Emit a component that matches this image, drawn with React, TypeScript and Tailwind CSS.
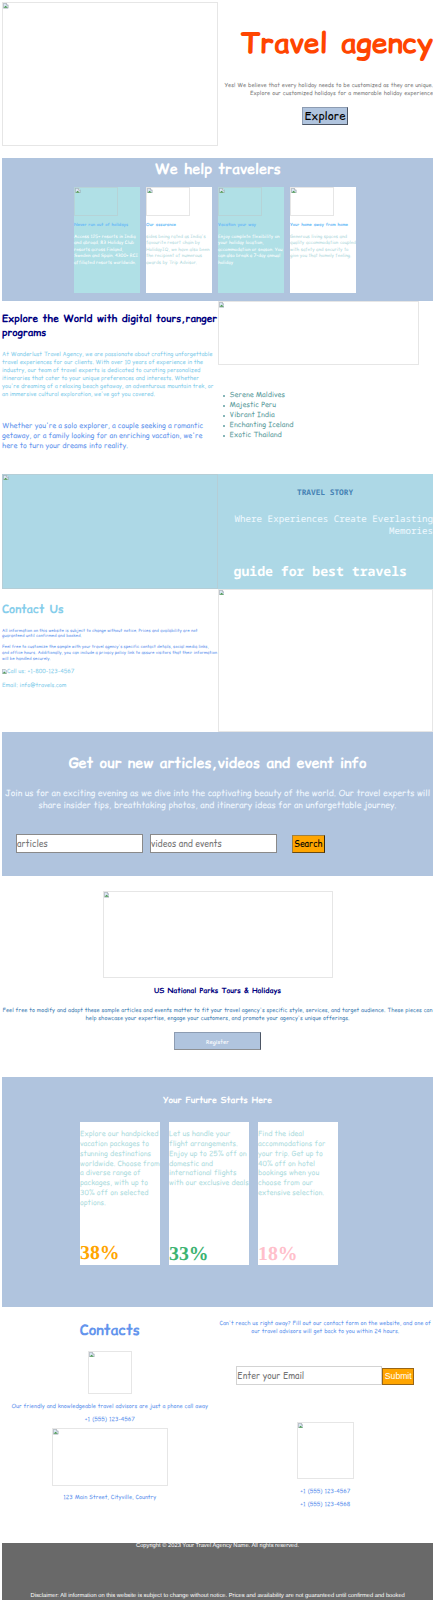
import type { ReactNode } from "react";

function Line({ w, children }: { w: string; children: ReactNode }) {
  return <span className={"block whitespace-nowrap [text-align-last:justify] " + w}>{children}</span>;
}

function Picture({ className }: { className: string }) {
  return (
    <div className={"shrink-0 border border-[#c0c0c0]/40 " + className}>
      <svg viewBox="0 0 16 16" className="block size-[5.5px]">
        <path d="M1 1h9l5 5v9H1z" fill="#dbe8f5" stroke="#8a9299" strokeWidth="1.5" />
        <path d="M10 1v5h5" fill="#fff" stroke="#8a9299" strokeWidth="1.5" />
        <path d="M2 14l5-6 4 3 3 3z" fill="#4f9a51" />
      </svg>
    </div>
  );
}

function HelpCard({ tone, heading, children }: { tone: string; heading: ReactNode; children: ReactNode }) {
  return (
    <div className={"h-[106.5px] w-[66px] " + tone}>
      <Picture className="h-[29.5px] w-[44px]" />
      <h3 className="mt-[5.4px] text-[4.3px] leading-[6px] font-bold text-[#6dbcf7]">{heading}</h3>
      <div className="mt-[6px] text-[4.6px] leading-[6.45px]">{children}</div>
    </div>
  );
}

function Offer({ percent, percentTone, children }: { percent: string; percentTone: string; children: ReactNode }) {
  return (
    <div className="flex h-[143.5px] w-[80px] flex-col justify-between bg-white">
      <div className="pt-[8px] text-[7.2px] leading-[9.9px] text-[#b0dde0]">{children}</div>
      <p className={"font-['Liberation_Serif',serif] text-[19.8px] leading-[22px] font-bold " + percentTone}>{percent}</p>
    </div>
  );
}

export default function App() {
  return (
    <div className="h-[1600px] w-[433px] overflow-hidden bg-white pt-[2px] pl-[2px] font-['Comic_Relief','Comic_Sans_MS','Comic_Neue','Open_Sans',cursive] [text-rendering:geometricPrecision]">
      <section className="flex h-[156px]">
        <Picture className="h-[144px] w-[215.5px]" />
        <div className="flex grow flex-col items-end">
          <h1 className="mt-[20.5px] text-[28.5px] leading-[40px] font-bold text-[#ff4500]">
            <Line w="w-[192.5px]">Travel agency</Line>
          </h1>
          <div className="mt-[18.3px] flex flex-col items-end text-[5.65px] leading-[8.1px] text-[#808080]">
            <Line w="w-[208.5px]">Yes! We believe that every holiday needs to be customized as they are unique.</Line>
            <Line w="w-[183px]">Explore our customized holidays for a memorable holiday experience</Line>
          </div>
          <button className="mt-[10.2px] mr-[85px] h-[18px] w-[46px] border border-t-[#8d9cb2] border-r-[#4c5564] border-b-[#4c5564] border-l-[#8d9cb2] bg-[#b0c4de] pt-[1px] text-[11.5px] leading-[15px] text-black">
            Explore
          </button>
        </div>
      </section>

      <section className="flex h-[143.2px] flex-col items-center bg-[#b0c4de]">
        <h2 className="pt-[0.8px] text-[14.4px] leading-[21px] font-bold text-white">
          <Line w="w-[125.5px]">We help travelers</Line>
        </h2>
        <div className="mt-[7px] mr-[5px] flex gap-[6px]">
          <HelpCard tone="bg-[#b0e0e6] text-white" heading={<Line w="w-[54px]">Never run out of holidays</Line>}>
            <Line w="w-[61.5px]">Access 125+ resorts in India</Line>
            <Line w="w-[60px]">and abroad. 83 Holiday Club</Line>
            <Line w="w-[49px]">resorts across Finland,</Line>
            <Line w="w-[64px]">Sweden and Spain. 4300+ RCI</Line>
            <Line w="w-[62px]">affiliated resorts worldwide.</Line>
          </HelpCard>
          <HelpCard tone="bg-white text-[#b0d8dc]" heading={<Line w="w-[30px]">Our assurance</Line>}>
            <Line w="w-[59.5px]">sides being rated as India's</Line>
            <Line w="w-[54px]">favourite resort chain by</Line>
            <Line w="w-[63.5px]">HolidayIQ, we have also been</Line>
            <Line w="w-[56px]">the recipient of numerous</Line>
            <Line w="w-[51px]">awards by Trip Advisor.</Line>
          </HelpCard>
          <HelpCard tone="bg-[#b0e0e6] text-white" heading={<Line w="w-[38px]">Vacation your way</Line>}>
            <Line w="w-[61.5px]">Enjoy complete flexibility on</Line>
            <Line w="w-[45.5px]">your holiday location,</Line>
            <Line w="w-[64.5px]">accommodation or season. You</Line>
            <Line w="w-[62px]">can also break a 7-day annual</Line>
            <Line w="w-[15px]">holiday</Line>
          </HelpCard>
          <HelpCard tone="bg-white text-[#b0d8dc]" heading={<Line w="w-[58px]">Your home away from home</Line>}>
            <Line w="w-[57px]">Generous living spaces and</Line>
            <Line w="w-[66px]">quality accommodation coupled</Line>
            <Line w="w-[58.5px]">with safety and security to</Line>
            <Line w="w-[60px]">give you that homely feeling.</Line>
          </HelpCard>
        </div>
      </section>

      <section className="flex h-[172.8px]">
        <div className="w-[215.5px] pt-[10.5px]">
          <h2 className="text-[10.1px] leading-[14px] font-bold text-[#000080]">
            <Line w="w-[215px]">Explore the World with digital tours,ranger</Line>
            <Line w="w-[44px]">programs</Line>
          </h2>
          <div className="mt-[10px] text-[5.75px] leading-[8.1px] text-[#87ceeb]">
            <Line w="w-[210.5px]">At Wanderlust Travel Agency, we are passionate about crafting unforgettable</Line>
            <Line w="w-[201px]">travel experiences for our clients. With over 10 years of experience in the</Line>
            <Line w="w-[198.5px]">industry, our team of travel experts is dedicated to curating personalized</Line>
            <Line w="w-[197px]">itineraries that cater to your unique preferences and interests. Whether</Line>
            <Line w="w-[211.5px]">you're dreaming of a relaxing beach getaway, an adventurous mountain trek, or</Line>
            <Line w="w-[152px]">an immersive cultural exploration, we've got you covered.</Line>
          </div>
          <div className="mt-[23.5px] text-[7.2px] leading-[9.9px] text-[#6495ed]">
            <Line w="w-[201px]">Whether you're a solo explorer, a couple seeking a romantic</Line>
            <Line w="w-[200px]">getaway, or a family looking for an enriching vacation, we're</Line>
            <Line w="w-[126px]">here to turn your dreams into reality.</Line>
          </div>
        </div>
        <div>
          <Picture className="h-[63.5px] w-[201.5px]" />
          <ul className="mt-[26.5px] ml-[5px] text-[7.2px] leading-[9.95px] text-[#5f9ea0]">
            {["Serene Maldives", "Majestic Peru", "Vibrant India", "Enchanting Iceland", "Exotic Thailand"].map((place) => (
              <li key={place} className="flex items-center gap-[4.5px]">
                <span className="size-[2.6px] rounded-full bg-[#5f9ea0]" />
                {place}
              </li>
            ))}
          </ul>
        </div>
      </section>

      <section className="flex h-[114.8px] bg-[#add8e6] font-['Noto_Sans_Mono','DejaVu_Sans_Mono',monospace]">
        <Picture className="h-[114.8px] w-[215.5px]" />
        <div className="flex grow flex-col">
          <h3 className="mt-[14.5px] ml-[79.5px] text-[7.8px] leading-[11px] font-bold text-[#4682b4]">TRAVEL STORY</h3>
          <p className="mt-[13.3px] flex flex-col items-end text-[9.2px] leading-[12px] whitespace-nowrap text-[#f0f8ff]">
            <span>Where Experiences Create Everlasting</span>
            <span>Memories</span>
          </p>
          <h2 className="mt-[25.7px] ml-[16px] text-[13.15px] leading-[18px] font-bold whitespace-nowrap text-white">guide for best travels</h2>
        </div>
      </section>

      <section className="flex h-[143.5px]">
        <div className="w-[215.5px] text-[#6495ed]">
          <h2 className="mt-[12.5px] text-[11.5px] leading-[16px] font-bold text-[#87ceeb]">
            <Line w="w-[61.5px]">Contact Us</Line>
          </h2>
          <div className="mt-[11.3px] text-[4.3px] leading-[5.9px]">
            <Line w="w-[195.5px]">All information on this website is subject to change without notice. Prices and availability are not</Line>
            <Line w="w-[79.5px]">guaranteed until confirmed and booked.</Line>
          </div>
          <div className="mt-[4.6px] text-[4.3px] leading-[5.9px]">
            <Line w="w-[206px]">Feel free to customize the sample with your travel agency's specific contact details, social media links,</Line>
            <Line w="w-[215px]">and office hours. Additionally, you can include a privacy policy link to assure visitors that their information</Line>
            <Line w="w-[48.5px]">will be handled securely.</Line>
          </div>
          <div className="mt-[4.5px] flex h-[8px] items-center text-[5.75px] leading-[8px] text-[#87ceeb]">
            <svg viewBox="0 0 16 16" className="block size-[5px]">
              <path d="M1 1h9l5 5v9H1z" fill="#dbe8f5" stroke="#8a9299" strokeWidth="1.5" />
              <path d="M2 14l5-6 4 3 3 3z" fill="#4f9a51" />
            </svg>
            <Line w="w-[67px]">Call us: +1-800-123-4567</Line>
          </div>
          <p className="mt-[6px] text-[5.75px] leading-[8px] text-[#87ceeb]">
            <Line w="w-[64px]">Email: info@travels.com</Line>
          </p>
        </div>
        <Picture className="h-[143.5px] w-[215.5px]" />
      </section>

      <section className="h-[143.4px] bg-[#b0c4de] pt-[21px]">
        <div className="flex flex-col items-center">
          <h2 className="text-[14.4px] leading-[20px] font-bold text-white">
            <Line w="w-[297.5px]">Get our new articles,videos and event info</Line>
          </h2>
          <div className="mt-[14px] flex flex-col items-center text-[8.6px] leading-[12.1px] text-[#f0f8ff]">
            <Line w="w-[425px]">Join us for an exciting evening as we dive into the captivating beauty of the world. Our travel experts will</Line>
            <Line w="w-[358px]">share insider tips, breathtaking photos, and itinerary ideas for an unforgettable journey.</Line>
          </div>
        </div>
        <form className="mt-[22.5px] ml-[14px] flex items-center text-[8.65px]">
          <input placeholder="articles" className="h-[19.5px] w-[126.5px] border border-[#8a8a8a] bg-white pt-[1px] placeholder:text-[#757575]" />
          <input placeholder="videos and events" className="ml-[7.5px] h-[19.5px] w-[126.5px] border border-[#8a8a8a] bg-white pt-[1px] placeholder:text-[#757575]" />
          <button type="button" className="ml-[15px] h-[18px] w-[33.5px] border border-t-[#a08040] border-r-[#3b2a08] border-b-[#6b4a10] border-l-[#a08040] bg-[#ffa500] pt-[1px] leading-[14px] text-black">
            Search
          </button>
        </form>
      </section>

      <section className="flex h-[201px] flex-col items-center pt-[15.8px]">
        <Picture className="h-[87px] w-[230px]" />
        <h3 className="mt-[7.8px] text-[7.2px] leading-[10px] font-bold text-[#000080]">
          <Line w="w-[127px]">US National Parks Tours &amp; Holidays</Line>
        </h3>
        <div className="mt-[9.5px] flex flex-col items-center text-[5.7px] leading-[8.1px] text-[#4682b4]">
          <Line w="w-[430px]">Feel free to modify and adapt these sample articles and events matter to fit your travel agency's specific style, services, and target audience. These pieces can</Line>
          <Line w="w-[264px]">help showcase your expertise, engage your customers, and promote your agency's unique offerings.</Line>
        </div>
        <button className="mt-[10.5px] h-[17.5px] w-[87px] border border-t-[#8d9cb2] border-r-[#4c5564] border-b-[#8d8f92] border-l-[#8d9cb2] bg-[#b0c4de] pt-[1px] text-[5.8px] leading-[14px] text-white">
          Register
        </button>
      </section>

      <section className="flex h-[230px] flex-col items-center bg-[#b0c4de] pt-[17.5px]">
        <h3 className="text-[8.65px] leading-[12px] font-bold text-white">
          <Line w="w-[109px]">Your Furture Starts Here</Line>
        </h3>
        <div className="mt-[15.7px] mr-[17px] flex gap-[9px]">
          <Offer percent="38%" percentTone="text-[#ffa500] pb-[1.5px]">
            <Line w="w-[78px]">Explore our handpicked</Line>
            <Line w="w-[69px]">vacation packages to</Line>
            <Line w="w-[71px]">stunning destinations</Line>
            <Line w="w-[79.5px]">worldwide. Choose from</Line>
            <Line w="w-[60px]">a diverse range of</Line>
            <Line w="w-[68px]">packages, with up to</Line>
            <Line w="w-[68.5px]">30% off on selected</Line>
            <Line w="w-[26px]">options.</Line>
          </Offer>
          <Offer percent="33%" percentTone="text-[#3cb371] pb-[0.5px]">
            <Line w="w-[61px]">Let us handle your</Line>
            <Line w="w-[68px]">flight arrangements.</Line>
            <Line w="w-[77.5px]">Enjoy up to 25% off on</Line>
            <Line w="w-[44px]">domestic and</Line>
            <Line w="w-[67.5px]">international flights</Line>
            <Line w="w-[79.5px]">with our exclusive deals</Line>
          </Offer>
          <Offer percent="18%" percentTone="text-[#ffc0cb] pb-[0.5px]">
            <Line w="w-[45.5px]">Find the ideal</Line>
            <Line w="w-[67.5px]">accommodations for</Line>
            <Line w="w-[64.5px]">your trip. Get up to</Line>
            <Line w="w-[57px]">40% off on hotel</Line>
            <Line w="w-[61px]">bookings when you</Line>
            <Line w="w-[55px]">choose from our</Line>
            <Line w="w-[66px]">extensive selection.</Line>
          </Offer>
        </div>
      </section>

      <section className="flex h-[236px] text-[5.7px] leading-[8.1px] text-[#6495ed]">
        <div className="flex w-[215.5px] flex-col items-center">
          <h2 className="mt-[13.5px] text-[14.4px] leading-[20px] font-bold">
            <Line w="w-[60px]">Contacts</Line>
          </h2>
          <Picture className="mt-[10.7px] h-[43.5px] w-[43.5px]" />
          <div className="mt-[7.2px]">
            <Line w="w-[196.5px]">Our friendly and knowledgeable travel advisors are just a phone call away</Line>
          </div>
          <div className="mt-[5.5px]">
            <Line w="w-[50px]">+1 (555) 123-4567</Line>
          </div>
          <Picture className="mt-[5px] h-[57.5px] w-[115.5px]" />
          <div className="mt-[7.7px]">
            <Line w="w-[93px]">123 Main Street, Cityville, Country</Line>
          </div>
        </div>
        <div className="flex w-[215.5px] flex-col items-center pt-[12px]">
          <Line w="w-[211.5px]">Can't reach us right away? Fill out our contact form on the website, and one of</Line>
          <Line w="w-[148px]">our travel advisors will get back to you within 24 hours.</Line>
          <form className="mt-[31.5px] flex items-end">
            <input placeholder="Enter your Email" className="h-[18.5px] w-[146px] border border-[#d3d3d3] bg-white pt-[1px] text-[8.65px] placeholder:text-[#757575]" />
            <button type="button" className="h-[17.3px] w-[32px] border border-[#996515] bg-[#ffa500] font-['Liberation_Sans',sans-serif] text-[8.65px] leading-[14px] text-white">
              Submit
            </button>
          </form>
          <Picture className="mt-[37px] h-[57.5px] w-[57.5px]" />
          <div className="mt-[7.2px]">
            <Line w="w-[50px]">+1 (555) 123-4567</Line>
          </div>
          <div className="mt-[5.7px]">
            <Line w="w-[50px]">+1 (555) 123-4568</Line>
          </div>
        </div>
      </section>

      <footer className="flex h-[57.3px] flex-col items-center justify-between bg-[#696969] font-['Liberation_Sans',sans-serif] text-[5.75px] leading-[7px] text-white">
        <Line w="w-[163px]">Copyright © 2023 Your Travel Agency Name. All rights reserved.</Line>
        <Line w="w-[374px]">Disclaimer: All information on this website is subject to change without notice. Prices and availability are not guaranteed until confirmed and booked</Line>
      </footer>
    </div>
  );
}
